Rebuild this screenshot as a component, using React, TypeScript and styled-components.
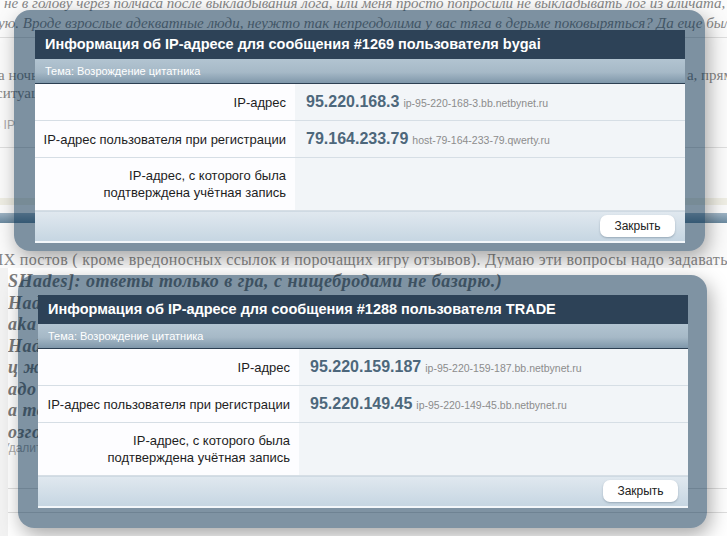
import React from "react"
import styled, { createGlobalStyle } from "styled-components"

const Global = createGlobalStyle`
  html, body { margin: 0; padding: 0; background: #f4f4f4; }
  body { width: 727px; height: 536px; overflow: hidden; font-family: "Liberation Sans", Arial, sans-serif; }
`

type Row = { label: React.ReactNode; ip?: string; host?: string; tall?: boolean }

type DialogData = { post: string; user: string; topic: string; rows: Row[] }

const dialogs: DialogData[] = [
  {
    post: "1269",
    user: "bygai",
    topic: "Возрождение цитатника",
    rows: [
      { label: "IP-адрес", ip: "95.220.168.3", host: "ip-95-220-168-3.bb.netbynet.ru" },
      { label: "IP-адрес пользователя при регистрации", ip: "79.164.233.79", host: "host-79-164-233-79.qwerty.ru" },
      { label: <>IP-адрес, с которого была<br />подтверждена учётная запись</>, tall: true },
    ],
  },
  {
    post: "1288",
    user: "TRADE",
    topic: "Возрождение цитатника",
    rows: [
      { label: "IP-адрес", ip: "95.220.159.187", host: "ip-95-220-159-187.bb.netbynet.ru" },
      { label: "IP-адрес пользователя при регистрации", ip: "95.220.149.45", host: "ip-95-220-149-45.bb.netbynet.ru" },
      { label: <>IP-адрес, с которого была<br />подтверждена учётная запись</>, tall: true },
    ],
  },
]

const leftLines = ["Hades]: вот", "aka нет", "Hades]: так", "ц же", "адо бы", "а то", "озго"]

const IpDialog: React.FC<{ data: DialogData; labelWidth: number }> = ({ data, labelWidth }) => (
  <S.Dialog>
    <S.Title>Информация об IP-адресе для сообщения #{data.post} пользователя {data.user}</S.Title>
    <S.Topic>Тема: {data.topic}</S.Topic>
    {data.rows.map((row, i) => (
      <S.Row key={i} $tall={row.tall} $labelWidth={labelWidth}>
        <S.Label>{row.label}</S.Label>
        <S.Value>
          {row.ip && <S.Ip>{row.ip}</S.Ip>}
          {row.host && <S.Host>{row.host}</S.Host>}
        </S.Value>
      </S.Row>
    ))}
    <S.Footer>
      <S.Button>Закрыть</S.Button>
    </S.Footer>
  </S.Dialog>
)

export default function App() {
  return (
    <>
      <Global />
      <S.Page>
        <S.TopShot>
          <S.ClippedLine>не в голову через полчаса после выкладывания лога, или меня просто попросили не выкладывать лог из аличата, знач</S.ClippedLine>
          <S.ItalicLine>ую. Вроде взрослые адекватные люди, неужто так непреодолима у вас тяга в дерьме поковыряться? Да еще было бы в</S.ItalicLine>
          <S.Rule $top={4} />
          <S.SplitLine $top={28}>
            <span>а ночь</span>
            <span>а, прям</span>
          </S.SplitLine>
          <S.PlainLine>ситуация</S.PlainLine>
          <S.SmallLine $top={16}>ь IP</S.SmallLine>
          <S.Rule $top={15} />
          <S.Band />
          <S.Stripe />
          <S.WideLine>IX постов ( кроме вредоносных ссылок и порочащих игру отзывов). Думаю эти вопросы надо задавать</S.WideLine>
          <S.Frame $left={14} $top={10} $width={691} $pad="20px 20px 8px 21px">
            <IpDialog data={dialogs[0]} labelWidth={260} />
          </S.Frame>
        </S.TopShot>
        <S.BottomShot>
          <S.Sheet>
            <S.BoldLine $top={3}>SHades]: ответы только в гра, с нищебродами не базарю.)</S.BoldLine>
            {leftLines.map((t, i) => (
              <S.BoldLine key={i}>{t}</S.BoldLine>
            ))}
            <S.SmallLine $top={-2}>Удалить</S.SmallLine>
            <S.Rule $top={33} />
            <S.Rule $top={23} />
          </S.Sheet>
          <S.Frame $left={18} $top={7} $width={689} $pad="20px 19px 20px 20px">
            <IpDialog data={dialogs[1]} labelWidth={261} />
          </S.Frame>
        </S.BottomShot>
      </S.Page>
    </>
  )
}

const S = {
  Page: styled.div`
    display: flex;
    flex-direction: column;
    width: 727px;
    height: 536px;
    overflow: hidden;
  `,
  TopShot: styled.div`
    position: relative;
    height: 268px;
    background: #fbfbfb;
    overflow: hidden;
    font-family: "Liberation Serif", Georgia, serif;
    color: #858585;
  `,
  BottomShot: styled.div`
    position: relative;
    height: 268px;
    padding-left: 8px;
    background: #f2f2f2;
    overflow: hidden;
  `,
  Sheet: styled.div`
    height: 100%;
    overflow: hidden;
    background: #ffffff;
    font-family: "Liberation Serif", Georgia, serif;
    color: #7a7a7a;
  `,
  ClippedLine: styled.div`
    margin-top: -7px;
    padding-left: 4px;
    height: 20px;
    line-height: 20px;
    font-size: 15px;
    font-style: italic;
    white-space: nowrap;
  `,
  ItalicLine: styled.div`
    height: 20px;
    line-height: 20px;
    font-size: 15px;
    font-style: italic;
    white-space: nowrap;
    margin-left: -2px;
  `,
  PlainLine: styled.div`
    height: 18px;
    line-height: 18px;
    font-size: 15px;
    white-space: nowrap;
    margin-left: -4px;
  `,
  WideLine: styled.div`
    margin-top: 28px;
    height: 18px;
    line-height: 18px;
    font-size: 16px;
    letter-spacing: 0.3px;
    white-space: nowrap;
    margin-left: -2px;
  `,
  SplitLine: styled.div<{ $top: number }>`
    display: flex;
    justify-content: space-between;
    margin: ${(p) => p.$top}px -6px 0 -2px;
    height: 18px;
    line-height: 18px;
    font-size: 15px;
    white-space: nowrap;
  `,
  SmallLine: styled.div<{ $top: number }>`
    margin-top: ${(p) => p.$top}px;
    margin-left: -6px;
    height: 14px;
    line-height: 14px;
    font-family: "Liberation Sans", Arial, sans-serif;
    font-size: 12px;
    color: #a9a9a9;
  `,
  Rule: styled.div<{ $top: number }>`
    margin-top: ${(p) => p.$top}px;
    height: 1px;
    background: #dedede;
  `,
  Band: styled.div`
    margin-top: 50px;
    height: 7px;
    background: #efeee4;
  `,
  Stripe: styled.div`
    margin-top: 8px;
    height: 10px;
    background: linear-gradient(#9fb4c4, #6a899f);
  `,
  BoldLine: styled.div<{ $top?: number }>`
    margin-top: ${(p) => p.$top ?? 0}px;
    height: 21.5px;
    line-height: 21.5px;
    font-size: 18px;
    letter-spacing: 0.5px;
    font-weight: bold;
    font-style: italic;
    white-space: nowrap;
  `,
  Frame: styled.div<{ $left: number; $top: number; $width: number; $pad: string }>`
    position: absolute;
    left: ${(p) => p.$left}px;
    top: ${(p) => p.$top}px;
    width: ${(p) => p.$width}px;
    box-sizing: border-box;
    padding: ${(p) => p.$pad};
    background: rgba(0, 40, 72, 0.5);
    border-radius: 16px;
    box-shadow: 3px 7px 20px rgba(0, 0, 0, 0.35);
  `,
  Dialog: styled.div`
    display: flex;
    flex-direction: column;
    font-family: "Liberation Sans", Tahoma, Arial, sans-serif;
  `,
  Title: styled.div`
    height: 29px;
    line-height: 29px;
    padding-left: 10px;
    background: #2d4257;
    color: #ffffff;
    font-size: 14.5px;
    font-weight: bold;
    white-space: nowrap;
  `,
  Topic: styled.div`
    height: 24px;
    line-height: 25px;
    padding-left: 10px;
    background: linear-gradient(#b2c4d1 0%, #a6b9c7 55%, #7f97aa 100%);
    border-bottom: 1px solid #2c3f52;
    color: #ffffff;
    font-size: 11px;
  `,
  Row: styled.div<{ $tall?: boolean; $labelWidth: number }>`
    display: grid;
    grid-template-columns: ${(p) => p.$labelWidth}px 1fr;
    height: ${(p) => (p.$tall ? 53 : 37)}px;
    box-sizing: border-box;
    border-bottom: 1px solid #d6dee5;
    &:last-of-type { border-bottom: none; }
  `,
  Label: styled.div`
    display: flex;
    align-items: center;
    justify-content: flex-end;
    padding-right: 9px;
    background: #fdfdff;
    color: #1e1e1e;
    font-size: 13px;
    line-height: 17px;
    text-align: right;
  `,
  Value: styled.div`
    display: flex;
    align-items: center;
    gap: 4px;
    padding-left: 11px;
    background: #f2f5f8;
  `,
  Ip: styled.span`
    color: #4d677b;
    font-size: 16px;
    font-weight: bold;
  `,
  Host: styled.span`
    color: #8c8c8c;
    font-size: 10.5px;
    padding-top: 2px;
  `,
  Footer: styled.div`
    display: flex;
    align-items: center;
    justify-content: flex-end;
    height: 32px;
    box-sizing: border-box;
    padding: 0 10px 2px 0;
    background: linear-gradient(#e0e8ef, #c6d6e2);
    border-top: 1px solid #cfdae3;
    border-bottom: 2px solid #f3f7fa;
  `,
  Button: styled.div`
    width: 75px;
    height: 22px;
    line-height: 22px;
    text-align: center;
    background: #ffffff;
    border-radius: 7px;
    box-shadow: 0 1px 2px rgba(60, 80, 100, 0.35);
    color: #222;
    font-size: 12px;
  `,
}
